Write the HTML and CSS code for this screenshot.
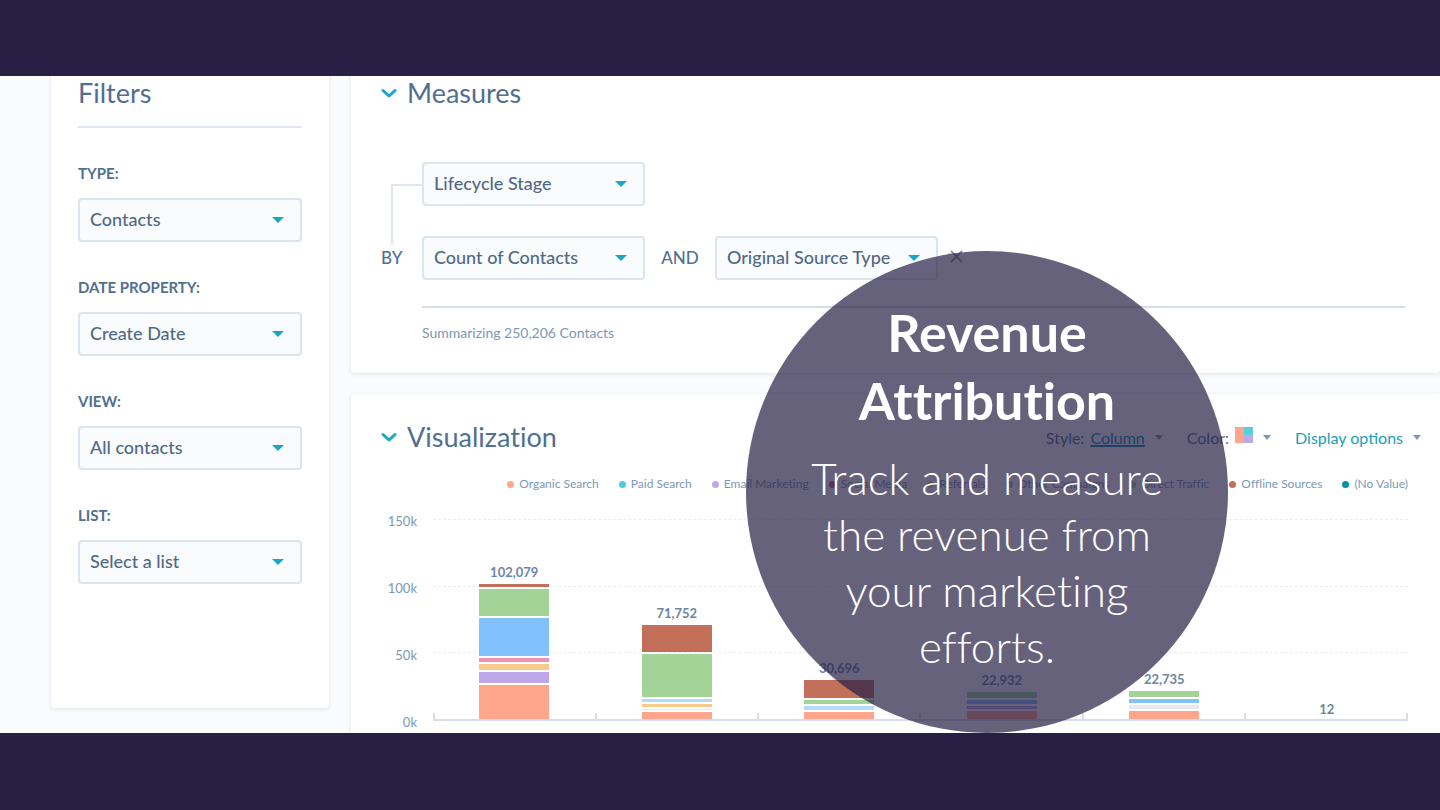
FILE: index.html
```html
<!DOCTYPE html>
<html lang="en">
<head>
    <meta charset="UTF-8">
    <meta name="viewport" content="width=device-width, initial-scale=1.0">
    <title>Revenue Attribution</title>
    <link rel="stylesheet" href="styles.css">
</head>
<body>
    <main class="report">
        <aside class="card filters">
            <h2 class="card-title">Filters</h2>
            <form class="filter-form">
                <label class="filter-label" for="type">Type:</label>
                <div class="select"><select id="type"><option>Contacts</option></select></div>

                <label class="filter-label" for="date-property">Date property:</label>
                <div class="select"><select id="date-property"><option>Create Date</option></select></div>

                <label class="filter-label" for="view">View:</label>
                <div class="select"><select id="view"><option>All contacts</option></select></div>

                <label class="filter-label" for="list">List:</label>
                <div class="select"><select id="list"><option>Select a list</option></select></div>
            </form>
        </aside>

        <div class="panels">
            <section class="card measures">
                <div class="card-header">
                    <svg class="chevron" viewBox="0 0 16 12"><path d="M2 3.500 L8 9 L14 3.500"/></svg>
                    <h2 class="card-title">Measures</h2>
                </div>
                <div class="measure-grid">
                    <div class="connector"></div>
                    <div class="select"><select aria-label="Measure"><option>Lifecycle Stage</option></select></div>
                    <label class="join" for="count">BY</label>
                    <div class="measure-row">
                        <div class="select"><select id="count"><option>Count of Contacts</option></select></div>
                        <label class="join join-and" for="source">AND</label>
                        <div class="select"><select id="source"><option>Original Source Type</option></select></div>
                        <button class="remove" type="button" aria-label="Remove">
                            <svg viewBox="0 0 14 14"><path d="M1 1 L13 13 M13 1 L1 13"/></svg>
                        </button>
                    </div>
                </div>
                <p class="summary">Summarizing 250,206 Contacts</p>
            </section>

            <section class="card visualization">
                <div class="card-header">
                    <svg class="chevron" viewBox="0 0 16 12"><path d="M2 3.500 L8 9 L14 3.500"/></svg>
                    <h2 class="card-title">Visualization</h2>
                    <div class="chart-options">
                        <span class="option">Style: <a class="option-link" href="#">Column</a><i class="caret"></i></span>
                        <span class="option">Color:
                            <svg class="swatch" viewBox="0 0 18 16"><path fill="#ffa58c" d="M0 0h9v16H0z"/><path fill="#5bcfdb" d="M9 0h9v8H9z"/><path fill="#bda9ea" d="M9 8h9v8H9z"/></svg>
                            <i class="caret"></i></span>
                        <button class="display-options" type="button">Display options<i class="caret"></i></button>
                    </div>
                </div>

                <ul class="legend">
                    <li class="organic">Organic Search</li>
                    <li class="paid">Paid Search</li>
                    <li class="email">Email Marketing</li>
                    <li class="social">Social Media</li>
                    <li class="referrals">Referrals</li>
                    <li class="other">Other Campaigns</li>
                    <li class="direct">Direct Traffic</li>
                    <li class="offline">Offline Sources</li>
                    <li class="none">(No Value)</li>
                </ul>

                <div class="chart">
                    <div class="y-axis"><span>150k</span><span>100k</span><span>50k</span><span>0k</span></div>
                    <div class="plot">
                        <div class="grid-lines"><i></i><i></i><i></i></div>
                        <div class="columns" id="columns"></div>
                    </div>
                </div>
            </section>
        </div>

        <div class="callout">
            <h1>Revenue Attribution</h1>
            <p>Track and measure the revenue from your marketing efforts.</p>
        </div>
    </main>

    <script>
        // Each column is listed from the top segment down: [series, height]
        const columns = [
            { total: '102,079', bars: [['offline', 3], ['direct', 27], ['other', 38], ['pink', 4], ['referrals', 6], ['email', 11], ['organic', 34]] },
            { total: '71,752', bars: [['offline', 27], ['direct', 43], ['sky', 3], ['referrals', 3], ['grey', 1], ['organic', 7]] },
            { total: '30,696', bars: [['offline', 18], ['direct', 4], ['sky', 4], ['organic', 7]] },
            { total: '22,932', bars: [['direct', 6], ['other', 4], ['email', 3], ['organic', 8]] },
            { total: '22,735', bars: [['direct', 6], ['other', 4], ['grey', 4], ['organic', 8]] },
            { total: '12', bars: [] }
        ];

        const container = document.getElementById('columns');
        columns.forEach(column => {
            const div = document.createElement('div');
            div.className = 'column';
            const total = document.createElement('span');
            total.className = 'total';
            total.textContent = column.total;
            div.appendChild(total);
            column.bars.forEach(([series, height]) => {
                const bar = document.createElement('div');
                bar.className = 'bar ' + series;
                bar.style.height = height + 'px';
                div.appendChild(bar);
            });
            container.appendChild(div);
        });
    </script>
</body>
</html>
```

FILE: styles.css
```css
* {
    box-sizing: border-box;
}

body {
    margin: 0;
    min-height: 100vh;
    padding: 76px 0 77px;
    background-color: #272044;
    color: #516f90;
    font-family: Lato, sans-serif;
    font-variant-ligatures: none;
    display: flex;
}

h1, h2, p, ul {
    margin: 0;
    padding: 0;
}

.report {
    position: relative;
    flex: 1;
    display: flex;
    align-items: flex-start;
    gap: 22px;
    padding-left: 51px;
    background-color: #fafbfd;
    overflow: hidden;
}

.card {
    background-color: #fff;
    border-radius: 0 0 4px 4px;
    box-shadow: 0 1px 4px #dfe3eb;
}

.card-title {
    font-size: 27px;
    line-height: 34px;
    font-weight: 400;
}

/* Filters */
.filters {
    width: 278px;
    padding: 0 27px 108px;
}

.filters .card-title {
    padding-bottom: 16px;
    border-bottom: 2px solid #dfe6ef;
}

.filter-form {
    display: flex;
    flex-direction: column;
    padding-top: 16px;
}

.filter-label {
    padding: 19px 0 15px;
    font-size: 15px;
    line-height: 20px;
    font-weight: 700;
    text-transform: uppercase;
}

.filter-form .select {
    margin-bottom: 16px;
}

.select {
    position: relative;
}

.select select {
    appearance: none;
    width: 100%;
    height: 44px;
    padding: 0 10px 2px;
    border: 2px solid #dce4ee;
    border-radius: 4px;
    background-color: #fafbfd;
    color: #516985;
    font: 500 18px Lato, sans-serif;
    font-variant-ligatures: none;
}

.select::after {
    content: "";
    position: absolute;
    top: 19px;
    right: 18px;
    border: 6px solid transparent;
    border-top-color: #17a9c4;
    border-bottom: 0;
}

/* Measures */
.panels {
    flex: 1;
    align-self: stretch;
    display: flex;
    flex-direction: column;
    gap: 21px;
}

.panels .card {
    padding-left: 30px;
}

.card-header {
    display: flex;
    align-items: center;
    gap: 10px;
}

.chevron {
    width: 16px;
    height: 12px;
    fill: none;
    stroke: #17a9c4;
    stroke-width: 3;
    stroke-linecap: round;
    stroke-linejoin: round;
}

.measures {
    padding-bottom: 29px;
}

.measure-grid {
    display: grid;
    grid-template-columns: 41px 1fr;
    row-gap: 30px;
    align-items: center;
    margin-top: 52px;
}

.measure-grid .select {
    width: 223px;
}

.connector {
    align-self: end;
    height: 60px;
    margin: 0 0 -38px 10px;
    border-top: 2px solid #dfe6ef;
    border-left: 2px solid #dfe6ef;
}

.join {
    padding-bottom: 2px;
    font-size: 17px;
    font-weight: 500;
}

.join-and {
    width: 70px;
    text-align: center;
}

.measure-row {
    display: flex;
    align-items: center;
}

.remove {
    padding: 0 0 3px;
    margin-left: 12px;
    border: 0;
    background: none;
    cursor: pointer;
}

.remove svg {
    display: block;
    width: 13px;
    height: 13px;
    stroke: #7c98b6;
    stroke-width: 2;
}

.summary {
    margin: 26px 35px 0 41px;
    padding-top: 14px;
    border-top: 2px solid #d5deea;
    color: #7c98b6;
    font-size: 14px;
    line-height: 22px;
}

/* Visualization */
.visualization {
    flex: 1;
    padding-top: 26px;
    border-radius: 4px 0 0 0;
}

.chart-options {
    display: flex;
    align-items: center;
    gap: 24px;
    margin-left: auto;
    padding-right: 19px;
    font-size: 16px;
}

.option {
    display: flex;
    align-items: center;
    gap: 6px;
}

.option-link {
    color: #0091ae;
    text-decoration-thickness: 2px;
}

.swatch {
    width: 18px;
    height: 16px;
    margin-bottom: 4px;
}

.caret {
    border: 4px solid transparent;
    border-top: 5px solid #7c98b6;
    border-bottom: 0;
    margin-left: 4px;
}

.display-options {
    display: flex;
    align-items: center;
    gap: 6px;
    padding: 0;
    border: 0;
    background: none;
    color: #17a0b9;
    font: 16px Lato, sans-serif;
    cursor: pointer;
}

.legend {
    display: flex;
    justify-content: flex-end;
    gap: 20px;
    margin-top: 20px;
    padding-right: 32px;
    list-style: none;
    color: #7c98b6;
    font-size: 12px;
    line-height: 20px;
    white-space: nowrap;
}

.legend li {
    display: flex;
    align-items: center;
    gap: 5px;
}

.legend li::before {
    content: "";
    width: 7px;
    height: 7px;
    border-radius: 50%;
    background-color: var(--series);
}

.organic { --series: #ffa58c; }
.paid { --series: #4fcbd9; }
.email { --series: #bda9ea; }
.social { --series: #f2545b; }
.pink { --series: #f18fb5; }
.referrals { --series: #f8c98d; }
.other { --series: #81c1fd; }
.direct { --series: #a4d398; }
.offline { --series: #c3705b; }
.none { --series: #0091ae; }
.sky { --series: #b3dcfb; }
.grey { --series: #e6e9f0; }

.chart {
    display: flex;
    gap: 16px;
    margin-top: 25px;
    padding-right: 32px;
}

.y-axis {
    display: flex;
    flex-direction: column;
    gap: 47px;
    width: 36px;
    margin: -8px 0 -10px;
    color: #7c98b6;
    font-size: 13px;
    line-height: 20px;
    text-align: right;
}

.plot {
    flex: 1;
    display: grid;
    height: 202px;
    border-bottom: 2px solid #d5deea;
}

.grid-lines, .columns {
    grid-area: 1 / 1;
    display: grid;
}

.grid-lines i {
    border-top: 1px dashed #e8edf4;
}

.columns {
    grid-template-columns: repeat(6, 1fr);
    /* tick marks between the columns */
    background: repeating-linear-gradient(to right, #d5deea 0 2px, transparent 2px calc((100% - 2px) / 6)) bottom / 100% 6px no-repeat;
}

.column {
    display: flex;
    flex-direction: column;
    justify-content: flex-end;
    align-items: center;
    gap: 2px;
}

.total {
    margin-bottom: 2px;
    color: #6b86a3;
    font-size: 13px;
    line-height: 16px;
    font-weight: 700;
}

.bar {
    width: 70px;
    background-color: var(--series);
}

/* Callout */
.callout {
    position: absolute;
    right: 212px;
    bottom: 0;
    width: 482px;
    height: 482px;
    padding: 47px 48px 0;
    border-radius: 50%;
    background-color: rgba(39, 32, 68, 0.7);
    color: #fff;
    text-align: center;
}

.callout h1 {
    padding: 0 50px;
    font-size: 52px;
    line-height: 68px;
    font-weight: 700;
}

.callout p {
    margin-top: 16px;
    font-size: 44px;
    line-height: 56px;
    font-weight: 300;
}
```
